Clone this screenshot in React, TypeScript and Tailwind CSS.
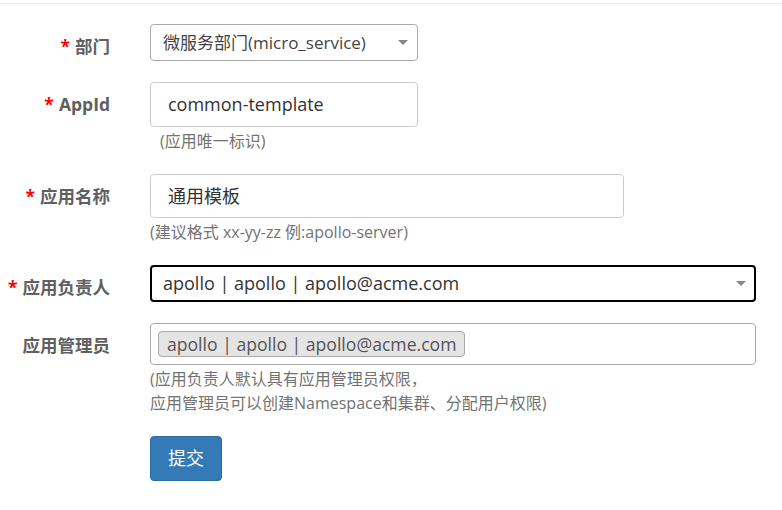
import React from "react";

const font = { fontFamily: '"Open Sans", "Noto Sans CJK SC", sans-serif' };

const Label = ({ text, required }: { text: string; required?: boolean }) => (
  <div className="w-[110px] shrink-0 pt-[10px] text-right text-[17.5px] font-bold leading-6 text-[#606060]">
    {required && <span className="mr-[5px] text-[#ff0000]">*</span>}
    {text}
  </div>
);

const Arrow = () => (
  <span className="h-0 w-0 border-x-[5px] border-t-[5px] border-x-transparent border-t-[#888]" />
);

const Hint = ({ children, indent }: { children: React.ReactNode; indent?: boolean }) => (
  <div className={`mt-[2px] text-[16px] leading-6 text-[#737373] ${indent ? "pl-[10px]" : ""}`}>
    {children}
  </div>
);

export default function App() {
  return (
    <div className="min-h-[510px] w-[782px] bg-white" style={font}>
      <div className="mt-[3px] border-t border-[#ececec]" />
      <div className="flex flex-col gap-[21px] pt-[20px]">
        <div className="flex">
          <Label text="部门" required />
          <div className="ml-[40px]">
            <div className="flex h-[37px] w-[268px] items-center justify-between rounded-[4px] border border-[#aaa] pl-[12px] pr-[9px] text-[17px] text-[#444]">
              <span>微服务部门(micro_service)</span>
              <Arrow />
            </div>
          </div>
        </div>

        <div className="flex">
          <Label text="AppId" required />
          <div className="ml-[40px]">
            <div className="flex h-[45px] w-[268px] items-center rounded-[4px] border border-[#ccc] pl-[17px] text-[18px] text-[#333]">
              common-template
            </div>
            <Hint indent>(应用唯一标识)</Hint>
          </div>
        </div>

        <div className="flex">
          <Label text="应用名称" required />
          <div className="ml-[40px]">
            <div className="flex h-[44px] w-[474px] items-center rounded-[4px] border border-[#ccc] pl-[17px] text-[18px] text-[#333]">
              通用模板
            </div>
            <Hint>(建议格式 xx-yy-zz 例:apollo-server)</Hint>
          </div>
        </div>

        <div className="flex">
          <Label text="应用负责人" required />
          <div className="ml-[40px]">
            <div className="flex h-[37px] w-[606px] items-center justify-between rounded-[4px] border-2 border-black pl-[11px] pr-[8px] text-[18px] text-[#333]">
              <span>apollo | apollo | apollo@acme.com</span>
              <Arrow />
            </div>
          </div>
        </div>

        <div className="flex">
          <Label text="应用管理员" />
          <div className="ml-[40px]">
            <div className="flex h-[42px] w-[606px] items-center rounded-[4px] border border-[#aaa] pl-[7px]">
              <span className="flex h-[26px] items-center rounded-[4px] border border-[#aaa] bg-[#e4e4e4] px-[8px] text-[17.6px] text-[#555]">
                apollo | apollo | apollo@acme.com
              </span>
            </div>
            <Hint>
              (应用负责人默认具有应用管理员权限，
              <br />
              应用管理员可以创建Namespace和集群、分配用户权限)
            </Hint>
          </div>
        </div>

        <div className="flex">
          <div className="w-[110px] shrink-0" />
          <div className="ml-[40px]">
            <button className="h-[45px] w-[72px] rounded-[4px] border border-[#2e6da4] bg-[#337ab7] text-[18px] text-white">
              提交
            </button>
          </div>
        </div>
      </div>
    </div>
  );
}
